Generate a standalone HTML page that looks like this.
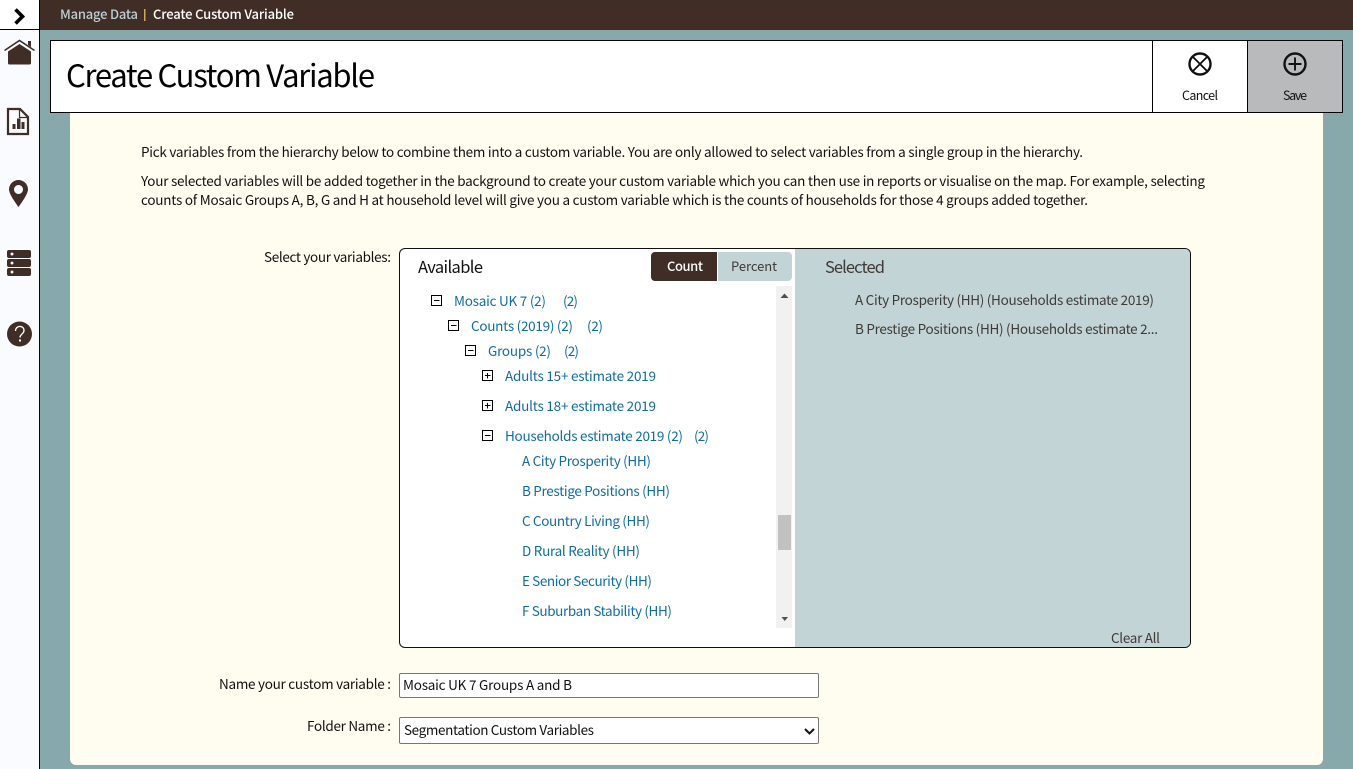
<!DOCTYPE html>
<html lang="en"><head><meta charset="utf-8"><title>Create Custom Variable</title>
<style>
html,body{margin:0;padding:0;width:1353px;height:769px;overflow:hidden;background:#87a9ac}
div{position:absolute;box-sizing:border-box}
svg{position:absolute;left:0;top:0}
text{font-family:"Noto Sans CJK JP","DejaVu Sans",sans-serif;font-size:13.500px;fill:#111}
.b{fill:#0f6ca5}.g{fill:#3f3a36}
</style></head><body>
<div style="left:0;top:0;width:40px;height:769px;background:#f9fbff;border-right:1px solid #000"></div>
<div style="left:0;top:0;width:40px;height:30px;background:#fff;border-right:1px solid #000;border-bottom:1px solid #000"></div>
<div style="left:40px;top:0;width:1313px;height:30px;background:#402d25"></div>
<div style="left:70px;top:100px;width:1253px;height:665px;background:#fffcf0;border-radius:0 0 6px 6px"></div>
<div style="left:50px;top:40px;width:1293px;height:73px;background:#fff;border:1px solid #000"></div>
<div style="left:1152px;top:40px;width:96px;height:73px;border:1px solid #000;border-top:1px solid #000"></div>
<div style="left:1247px;top:40px;width:96px;height:73px;background:#b9babc;border:1px solid #000"></div>
<div style="left:399px;top:248px;width:792px;height:400px;background:#fff;border:1px solid #111;border-radius:6px;overflow:hidden">
  <div style="left:395px;top:0;width:396px;height:398px;background:#c3d4d7"></div>
</div>
<div style="left:651px;top:252px;width:66px;height:29px;background:#402d25;border-radius:4px 0 0 4px"></div>
<div style="left:718px;top:252px;width:74px;height:29px;background:#c3d4d7;border-radius:0 4px 4px 0"></div>
<div style="left:776px;top:286px;width:16px;height:342px;background:#f1f1f1"></div>
<div style="left:778px;top:515px;width:13px;height:35px;background:#c1c1c1"></div>
<div style="left:399px;top:673px;width:420px;height:25px;background:#fff;border:1px solid #767676;border-radius:2px"></div>
<div style="left:399px;top:717px;width:420px;height:27px;background:#fff;border:1px solid #767676;border-radius:2px"></div>
<svg width="1353" height="769" viewBox="0 0 1353 769" xmlns="http://www.w3.org/2000/svg">
<!-- sidebar icons -->
<path d="M15.500 9.500 L22.500 16.500 L15.500 23.500" fill="none" stroke="#000" stroke-width="3.600"/>
<g fill="#402d25">
<path d="M4.500 50.500 L19.500 40.500 L34.500 50.500" fill="none" stroke="#402d25" stroke-width="1.600"/>
<path d="M28 41h3v6l-3-2z"/>
<path d="M8 51.500 L19.500 44 L31 51.500 V63 a1.500 1.500 0 0 1-1.500 1.500 H9.500 A1.500 1.500 0 0 1 8 63z"/>
<path d="M8 109 H20 L28 117 V134 H8z" fill="none" stroke="#402d25" stroke-width="2.200"/>
<path d="M19.500 109 V117.500 H28" fill="none" stroke="#402d25" stroke-width="1.200"/>
<rect x="12.500" y="124" width="3" height="5"/><rect x="17" y="118.500" width="3.500" height="10.500"/><rect x="21.500" y="122" width="3" height="7"/>
<path fill-rule="evenodd" d="M18.500 180 a9.500 9.500 0 0 1 9.500 9.500 c0 4-5.500 12-9.500 17.500 c-4-5.500-9.500-13.500-9.500-17.500 a9.500 9.500 0 0 1 9.500-9.500z M18.500 185 a4.500 4.500 0 1 0 .01 0z"/>
<path fill-rule="evenodd" d="M9 250h20a2 2 0 0 1 2 2v4a2 2 0 0 1-2 2H9a2 2 0 0 1-2-2v-4a2 2 0 0 1 2-2z M12 252.500a1.500 1.500 0 1 0 .01 0z"/>
<path fill-rule="evenodd" d="M9 259h20a2 2 0 0 1 2 2v4a2 2 0 0 1-2 2H9a2 2 0 0 1-2-2v-4a2 2 0 0 1 2-2z M12 261.500a1.500 1.500 0 1 0 .01 0z"/>
<path fill-rule="evenodd" d="M9 268h20a2 2 0 0 1 2 2v4a2 2 0 0 1-2 2H9a2 2 0 0 1-2-2v-4a2 2 0 0 1 2-2z M12 270.500a1.500 1.500 0 1 0 .01 0z"/>
<circle cx="19.500" cy="334" r="12.500"/>
</g>
<path d="M15.500 331 c0-6 8.500-6 8.500-.5 c0 3.500-4 3.500-4 7" fill="none" stroke="#fff" stroke-width="1.300"/>
<rect x="19" y="339.500" width="2" height="2" fill="#fff"/>
<!-- cancel/save icons -->
<circle cx="1200" cy="64" r="10.500" fill="none" stroke="#111" stroke-width="2.400"/>
<path d="M1192.500 56.500 L1207.500 71.500 M1207.500 56.500 L1192.500 71.500" stroke="#111" stroke-width="1.900"/>
<circle cx="1295" cy="64" r="10.500" fill="none" stroke="#111" stroke-width="2.400"/>
<path d="M1295 57.500 V70.500 M1288.500 64 H1301.500" stroke="#111" stroke-width="1.900"/>
<!-- tree boxes -->
<g fill="none" stroke="#000" stroke-width="1">
<rect x="431.500" y="295.500" width="10" height="10"/><path d="M434 300.500h5.500"/>
<rect x="448.500" y="320.500" width="10" height="10"/><path d="M451 325.500h5.500"/>
<rect x="465.500" y="345.500" width="10" height="10"/><path d="M468 350.500h5.500"/>
<rect x="482.500" y="370.500" width="10" height="10"/><path d="M485 375.500h5.500M487.500 373v5.500"/>
<rect x="482.500" y="400.500" width="10" height="10"/><path d="M485 405.500h5.500M487.500 403v5.500"/>
<rect x="482.500" y="430.500" width="10" height="10"/><path d="M485 435.500h5.500"/>
</g>
<path d="M780.500 298 L784.500 293.500 L788.500 298z" fill="#505050"/>
<path d="M781.500 617 L788 617 L784.750 621z" fill="#505050"/>
<path d="M805 729 L809.500 733.500 L814 729" fill="none" stroke="#111" stroke-width="2"/>
<!-- text -->
<text x="60" y="19" textLength="78" style="fill:#bccfd6;font-size:13px;font-weight:500">Manage Data</text>
<rect x="144" y="9" width="1.500" height="12" fill="#c9a86a"/>
<text x="153" y="19" textLength="141" style="fill:#fff;font-size:13px;font-weight:500">Create Custom Variable</text>
<text x="66" y="87" textLength="309" style="font-size:31px;fill:#000">Create Custom Variable</text>
<text x="1182" y="100" textLength="36" style="font-size:12.500px">Cancel</text>
<text x="1283" y="100" textLength="24" style="font-size:12.500px">Save</text>
<text x="141" y="157" textLength="942">Pick variables from the hierarchy below to combine them into a custom variable. You are only allowed to select variables from a single group in the hierarchy.</text>
<text x="141" y="186" textLength="1064">Your selected variables will be added together in the background to create your custom variable which you can then use in reports or visualise on the map. For example, selecting</text>
<text x="141" y="205" textLength="947">counts of Mosaic Groups A, B, G and H at household level will give you a custom variable which is the counts of households for those 4 groups added together.</text>
<text x="264" y="262" textLength="127">Select your variables:</text>
<text x="418" y="273" textLength="65" style="font-size:16.500px;fill:#111">Available</text>
<text x="667" y="271" textLength="36" style="fill:#fff;font-size:13px;font-weight:500">Count</text>
<text x="731" y="271" textLength="46" class="g" style="font-size:13px">Percent</text>
<text x="454" y="306" textLength="92" class="b">Mosaic UK 7 (2)</text><text x="563" y="306" textLength="15" class="b">(2)</text>
<text x="471" y="331" textLength="102" class="b">Counts (2019) (2)</text><text x="587" y="331" textLength="16" class="b">(2)</text>
<text x="488" y="356" textLength="63" class="b">Groups (2)</text><text x="564" y="356" textLength="15" class="b">(2)</text>
<text x="505" y="381" textLength="151" class="b">Adults 15+ estimate 2019</text>
<text x="505" y="411" textLength="151" class="b">Adults 18+ estimate 2019</text>
<text x="505" y="441" textLength="178" class="b">Households estimate 2019 (2)</text><text x="694" y="441" textLength="15" class="b">(2)</text>
<text x="522" y="466" textLength="129" class="b">A City Prosperity (HH)</text>
<text x="522" y="496" textLength="148" class="b">B Prestige Positions (HH)</text>
<text x="522" y="526" textLength="128" class="b">C Country Living (HH)</text>
<text x="522" y="556" textLength="118" class="b">D Rural Reality (HH)</text>
<text x="522" y="586" textLength="130" class="b">E Senior Security (HH)</text>
<text x="522" y="616" textLength="150" class="b">F Suburban Stability (HH)</text>
<text x="825" y="273" textLength="60" class="g" style="font-size:16.500px">Selected</text>
<text x="855" y="305" textLength="299" class="g">A City Prosperity (HH) (Households estimate 2019)</text>
<text x="855" y="334" textLength="303" class="g">B Prestige Positions (HH) (Households estimate 2...</text>
<text x="1111" y="643" textLength="49" class="g">Clear All</text>
<text x="219" y="689" textLength="172">Name your custom variable :</text>
<text x="403" y="690" textLength="169">Mosaic UK 7 Groups A and B</text>
<text x="307" y="731" textLength="84">Folder Name :</text>
<text x="404" y="735" textLength="190">Segmentation Custom Variables</text>
</svg>
</body></html>
